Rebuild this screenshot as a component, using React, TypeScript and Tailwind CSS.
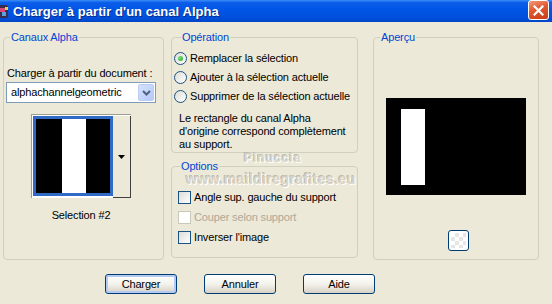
import React from 'react'

function Radio({ checked, label }: { checked?: boolean; label: string }) {
  return (
    <div className="flex items-center h-[19px] whitespace-nowrap">
      <div className="shrink-0 w-[13px] h-[13px] rounded-full border border-[#1C5180] bg-gradient-to-br from-[#DCDCD7] to-white flex items-center justify-center">
        {checked ? <div className="w-[5px] h-[5px] rounded-full bg-[radial-gradient(circle_at_35%_35%,#7CE07C,#1E9F1E)]" /> : null}
      </div>
      <span className="ml-[3px]">{label}</span>
    </div>
  )
}

function Check({ label, disabled }: { label: string; disabled?: boolean }) {
  return (
    <div className="flex items-center h-[20px] whitespace-nowrap">
      <div
        className={
          disabled
            ? 'shrink-0 w-[13px] h-[13px] border border-[#CAC8BB] bg-white'
            : 'shrink-0 w-[13px] h-[13px] border border-[#1C5180] bg-gradient-to-br from-[#DCDCD7] to-white'
        }
      />
      <span className={disabled ? 'ml-[3px] text-[#ACA899]' : 'ml-[3px]'}>{label}</span>
    </div>
  )
}

function Btn({ label, def }: { label: string; def?: boolean }) {
  return (
    <div
      className={
        'w-[72px] h-[20px] rounded-[3px] border border-[#003C74] bg-gradient-to-b from-white via-[#F3F2EC] to-[#D8D2C6] flex items-center justify-center ' +
        (def ? '[box-shadow:inset_0_0_0_2px_#B3CAF3]' : '')
      }
    >
      {label}
    </div>
  )
}

export default function App() {
  return (
    <div className="w-[552px] h-[304px] bg-[#ECE9D8] relative overflow-hidden font-['Liberation_Sans',Arial,sans-serif] text-[11px] leading-[13px] tracking-[-0.15px] text-black">
      {/* title bar */}
      <div className="h-[22px] flex items-center bg-[linear-gradient(180deg,#3C8DF6_0%,#0B5DE9_12%,#0055E4_45%,#0050DC_80%,#0046C6_100%)]">
        <svg width="9" height="15" viewBox="0 0 9 15" className="shrink-0">
          <rect x="-4" y="1" width="12" height="13" rx="2" fill="#3a2d4a" />
          <rect x="0" y="4" width="5" height="4" fill="#d94a7a" />
          <rect x="2" y="8" width="4" height="4" fill="#5aa0e0" />
          <rect x="5" y="3" width="3" height="3" fill="#e8d050" />
        </svg>
        <span className="ml-[4px] text-white font-bold text-[13px] tracking-[0.05px] [text-shadow:1px_1px_0_#0A2A8A]">
          Charger à partir d'un canal Alpha
        </span>
        <div className="ml-auto mr-[3px] w-[21px] h-[20px] -mt-[2px] rounded-[3px] border border-white bg-[linear-gradient(160deg,#F09A7C_0%,#E2582E_45%,#C63E18_100%)] flex items-center justify-center">
          <svg width="11" height="11" viewBox="0 0 11 11">
            <path d="M1.5 1.5 L9.5 9.5 M9.5 1.5 L1.5 9.5" stroke="white" strokeWidth="2.2" strokeLinecap="square" />
          </svg>
        </div>
      </div>

      {/* body */}
      <div className="flex items-start pt-[9px] pl-[3px]">
        {/* Canaux Alpha */}
        <fieldset className="w-[161px] h-[229px] border border-[#D0D0BF] rounded-[4px] px-[3px]">
          <legend className="ml-[3px] px-[1px] text-[#0046D5] leading-[13px]">Canaux Alpha</legend>
          <div className="mt-[23px]">Charger à partir du document :</div>
          <div className="mt-[2px] -ml-[1px] w-[150px] h-[21px] border border-[#7F9DB9] bg-white flex items-center">
            <span className="pl-[4px]">alphachannelgeometric</span>
            <div className="ml-auto mr-[1px] w-[16px] h-[17px] rounded-[2px] border border-[#B9CDF6] bg-gradient-to-br from-[#D5E2FC] to-[#B4C9F6] flex items-center justify-center">
              <svg width="9" height="6" viewBox="0 0 9 6">
                <path d="M1 1 L4.5 4.5 L8 1" stroke="#4D6185" strokeWidth="2" fill="none" />
              </svg>
            </div>
          </div>
          <div className="mt-[11px] ml-[24px] w-[100px] h-[84px] flex border-t border-l border-[#9D9D92] bg-white">
            <div className="mt-[1px] ml-[1px] w-[80px] h-[80px] border-[3px] border-[#316AC5] bg-black flex justify-center">
              <div className="ml-[2px] w-[24px] h-full bg-white" />
            </div>
            <div className="mt-[1px] w-[18px] h-[82px] bg-[#ECE9D8] border-r border-b border-[#404040] flex items-center justify-center">
              <svg width="7" height="4" viewBox="0 0 7 4">
                <path d="M0 0 L7 0 L3.5 4 Z" fill="#000" />
              </svg>
            </div>
          </div>
          <div className="mt-[11px] ml-[24px] w-[100px] text-center">Selection #2</div>
        </fieldset>

        {/* middle column */}
        <div className="ml-[7px] w-[187px] flex flex-col">
          <fieldset className="h-[122px] border border-[#D0D0BF] rounded-[4px] px-[2px]">
            <legend className="ml-[7px] px-[1px] text-[#0046D5] leading-[13px]">Opération</legend>
            <div className="mt-[5px] flex flex-col">
              <Radio checked label="Remplacer la sélection" />
              <Radio label="Ajouter à la sélection actuelle" />
              <Radio label="Supprimer de la sélection actuelle" />
            </div>
            <div className="mt-[6px] pl-[5px] whitespace-nowrap">
              Le rectangle du canal Alpha
              <br />
              d'origine correspond complètement
              <br />
              au support.
            </div>
          </fieldset>
          <fieldset className="mt-[7px] h-[98px] border border-[#D0D0BF] rounded-[4px] pl-[6px]">
            <legend className="ml-[2px] px-[1px] text-[#0046D5] leading-[13px]">Options</legend>
            <div className="mt-[14px] flex flex-col">
              <Check label="Angle sup. gauche du support" />
              <Check disabled label="Couper selon support" />
              <Check label="Inverser l'image" />
            </div>
          </fieldset>
        </div>

        {/* Aperçu */}
        <fieldset className="ml-[15px] w-[166px] h-[229px] border border-[#D0D0BF] rounded-[4px]">
          <legend className="ml-[6px] px-[1px] text-[#0046D5] leading-[13px]">Aperçu</legend>
          <div className="mt-[54px] ml-[12px] w-[140px] h-[97px] bg-black pl-[15px] pt-[11px]">
            <div className="w-[24px] h-[76px] bg-white" />
          </div>
          <div className="mt-[35px] ml-[74px] w-[21px] h-[21px] rounded-[3px] border border-[#003C74] bg-white p-[2px]">
            <div className="w-full h-full bg-[conic-gradient(#e6e6e6_25%,#ffffff_0_50%,#e6e6e6_0_75%,#ffffff_0)] bg-[length:8px_8px]" />
          </div>
        </fieldset>
      </div>

      {/* buttons */}
      <div className="mt-[14px] pl-[105px] flex gap-[27px]">
        <Btn def label="Charger" />
        <Btn label="Annuler" />
        <Btn label="Aide" />
      </div>

      {/* watermark */}
      <div className="absolute left-[244px] top-[152px] text-[12px] leading-[12px] font-bold tracking-[1px] text-[#D8D5C8] [text-shadow:1px_1px_0_#ffffff,-1px_-1px_0_#BDBAAD] pointer-events-none">
        Pinuccia
      </div>
      <div className="absolute left-[186px] top-[173px] text-[14px] leading-[12px] font-bold tracking-[0.4px] text-[#D8D5C8] [text-shadow:1px_1px_0_#ffffff,-1px_-1px_0_#BDBAAD] pointer-events-none">
        www.maildiregrafites.eu
      </div>
    </div>
  )
}
